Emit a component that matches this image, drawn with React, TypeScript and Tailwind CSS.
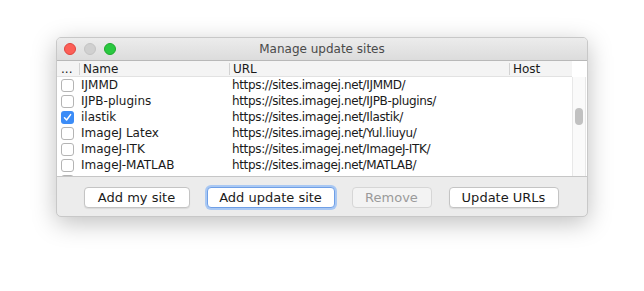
import React from 'react';

const sites = [
  { name: 'IJMMD', url: 'https://sites.imagej.net/IJMMD/', checked: false },
  { name: 'IJPB-plugins', url: 'https://sites.imagej.net/IJPB-plugins/', checked: false },
  { name: 'ilastik', url: 'https://sites.imagej.net/Ilastik/', checked: true },
  { name: 'ImageJ Latex', url: 'https://sites.imagej.net/Yul.liuyu/', checked: false },
  { name: 'ImageJ-ITK', url: 'https://sites.imagej.net/ImageJ-ITK/', checked: false },
  { name: 'ImageJ-MATLAB', url: 'https://sites.imagej.net/MATLAB/', checked: false },
];

function Checkbox({ checked }: { checked: boolean }) {
  if (checked) {
    return (
      <div className="w-[13px] h-[13px] rounded-[3px] bg-[#3b8cf7] flex items-center justify-center">
        <svg width="9" height="9" viewBox="0 0 9 9">
          <path d="M1.5 4.8 L3.6 7 L7.6 1.6" stroke="white" strokeWidth="1.5" fill="none" strokeLinecap="round" strokeLinejoin="round" />
        </svg>
      </div>
    );
  }
  return <div className="w-[13px] h-[13px] rounded-[3px] bg-white border border-[#b4b4b4]" />;
}

export default function App() {
  return (
    <div
      className="w-[644px] h-[291px] bg-white pl-[56px] pt-[37px] text-[12px] text-[#1a1a1a]"
      style={{ fontFamily: '"DejaVu Sans", "Liberation Sans", sans-serif' }}
    >
      <div className="w-[532px] h-[180px] rounded-[5px] bg-[#ececec] border border-[#c8c8c8] shadow-[0_6px_24px_rgba(0,0,0,0.25)] flex flex-col overflow-hidden">
        {/* Title bar */}
        <div className="h-[23px] shrink-0 flex items-center relative bg-gradient-to-b from-[#ececec] to-[#dcdcdc] border-b border-[#b8b8b8]">
          <div className="flex items-center gap-[8px] pl-[7px]">
            <div className="w-[12px] h-[12px] rounded-full bg-[#fc5f57] border border-[#e0443e]" />
            <div className="w-[12px] h-[12px] rounded-full bg-[#d0d0d0] border border-[#c4c4c4]" />
            <div className="w-[12px] h-[12px] rounded-full bg-[#2ac840] border border-[#1daa2c]" />
          </div>
          <div className="absolute inset-0 flex items-center justify-center text-[#4a4a4a]">Manage update sites</div>
        </div>

        {/* Table */}
        <div className="h-[116px] shrink-0 flex bg-white border-b border-[#c6c6c6]">
          <div className="w-[515px] flex flex-col">
            <div className="h-[16px] shrink-0 flex items-center bg-[#f4f4f4] border-b border-[#e2e2e2]">
              <div className="w-[22px] pl-[4px] leading-none">...</div>
              <div className="w-[150px] border-l border-[#d2d2d2] pl-[3px] leading-none">Name</div>
              <div className="w-[280px] border-l border-[#d2d2d2] pl-[3px] leading-none">URL</div>
              <div className="flex-1 border-l border-[#d2d2d2] pl-[3px] leading-none">Host</div>
            </div>
            <div className="flex-1 overflow-hidden">
              {sites.map((s) => (
                <div key={s.name} className="h-[16px] flex items-center">
                  <div className="w-[22px] pl-[4px]">
                    <Checkbox checked={s.checked} />
                  </div>
                  <div className="w-[150px] pl-[2px] whitespace-nowrap">{s.name}</div>
                  <div className="w-[280px] pl-[3px] whitespace-nowrap tracking-[-0.35px]">{s.url}</div>
                </div>
              ))}
              <div className="h-[16px] flex items-center">
                <div className="w-[22px] pl-[4px]">
                  <Checkbox checked={false} />
                </div>
              </div>
            </div>
          </div>
          <div className="flex-1 flex flex-col">
            <div className="h-[16px] bg-white" />
            <div className="w-[14px] flex-1 bg-[#fafafa] border-l border-r border-[#e8e8e8] pt-[31px] flex justify-center">
              <div className="w-[8px] h-[17px] rounded-full bg-[#c1c1c1]" />
            </div>
          </div>
        </div>

        {/* Buttons */}
        <div className="flex-1 flex items-center justify-center gap-[17px] pt-[2px] pr-[2px] text-[13px]">
          <button className="w-[106px] h-[21px] bg-white border border-[#c4c4c4] rounded-[4px] shadow-[0_1px_1px_rgba(0,0,0,0.08)]">
            Add my site
          </button>
          <button className="w-[128px] h-[21px] bg-white border border-[#6f9fe6] rounded-[4px] ring-2 ring-[#a9c8f3]">
            Add update site
          </button>
          <button className="w-[80px] h-[21px] bg-[#f3f3f3] border border-[#d6d6d6] rounded-[4px] text-[#9a9a9a]">
            Remove
          </button>
          <button className="w-[110px] h-[21px] bg-white border border-[#c4c4c4] rounded-[4px] shadow-[0_1px_1px_rgba(0,0,0,0.08)]">
            Update URLs
          </button>
        </div>
      </div>
    </div>
  );
}
